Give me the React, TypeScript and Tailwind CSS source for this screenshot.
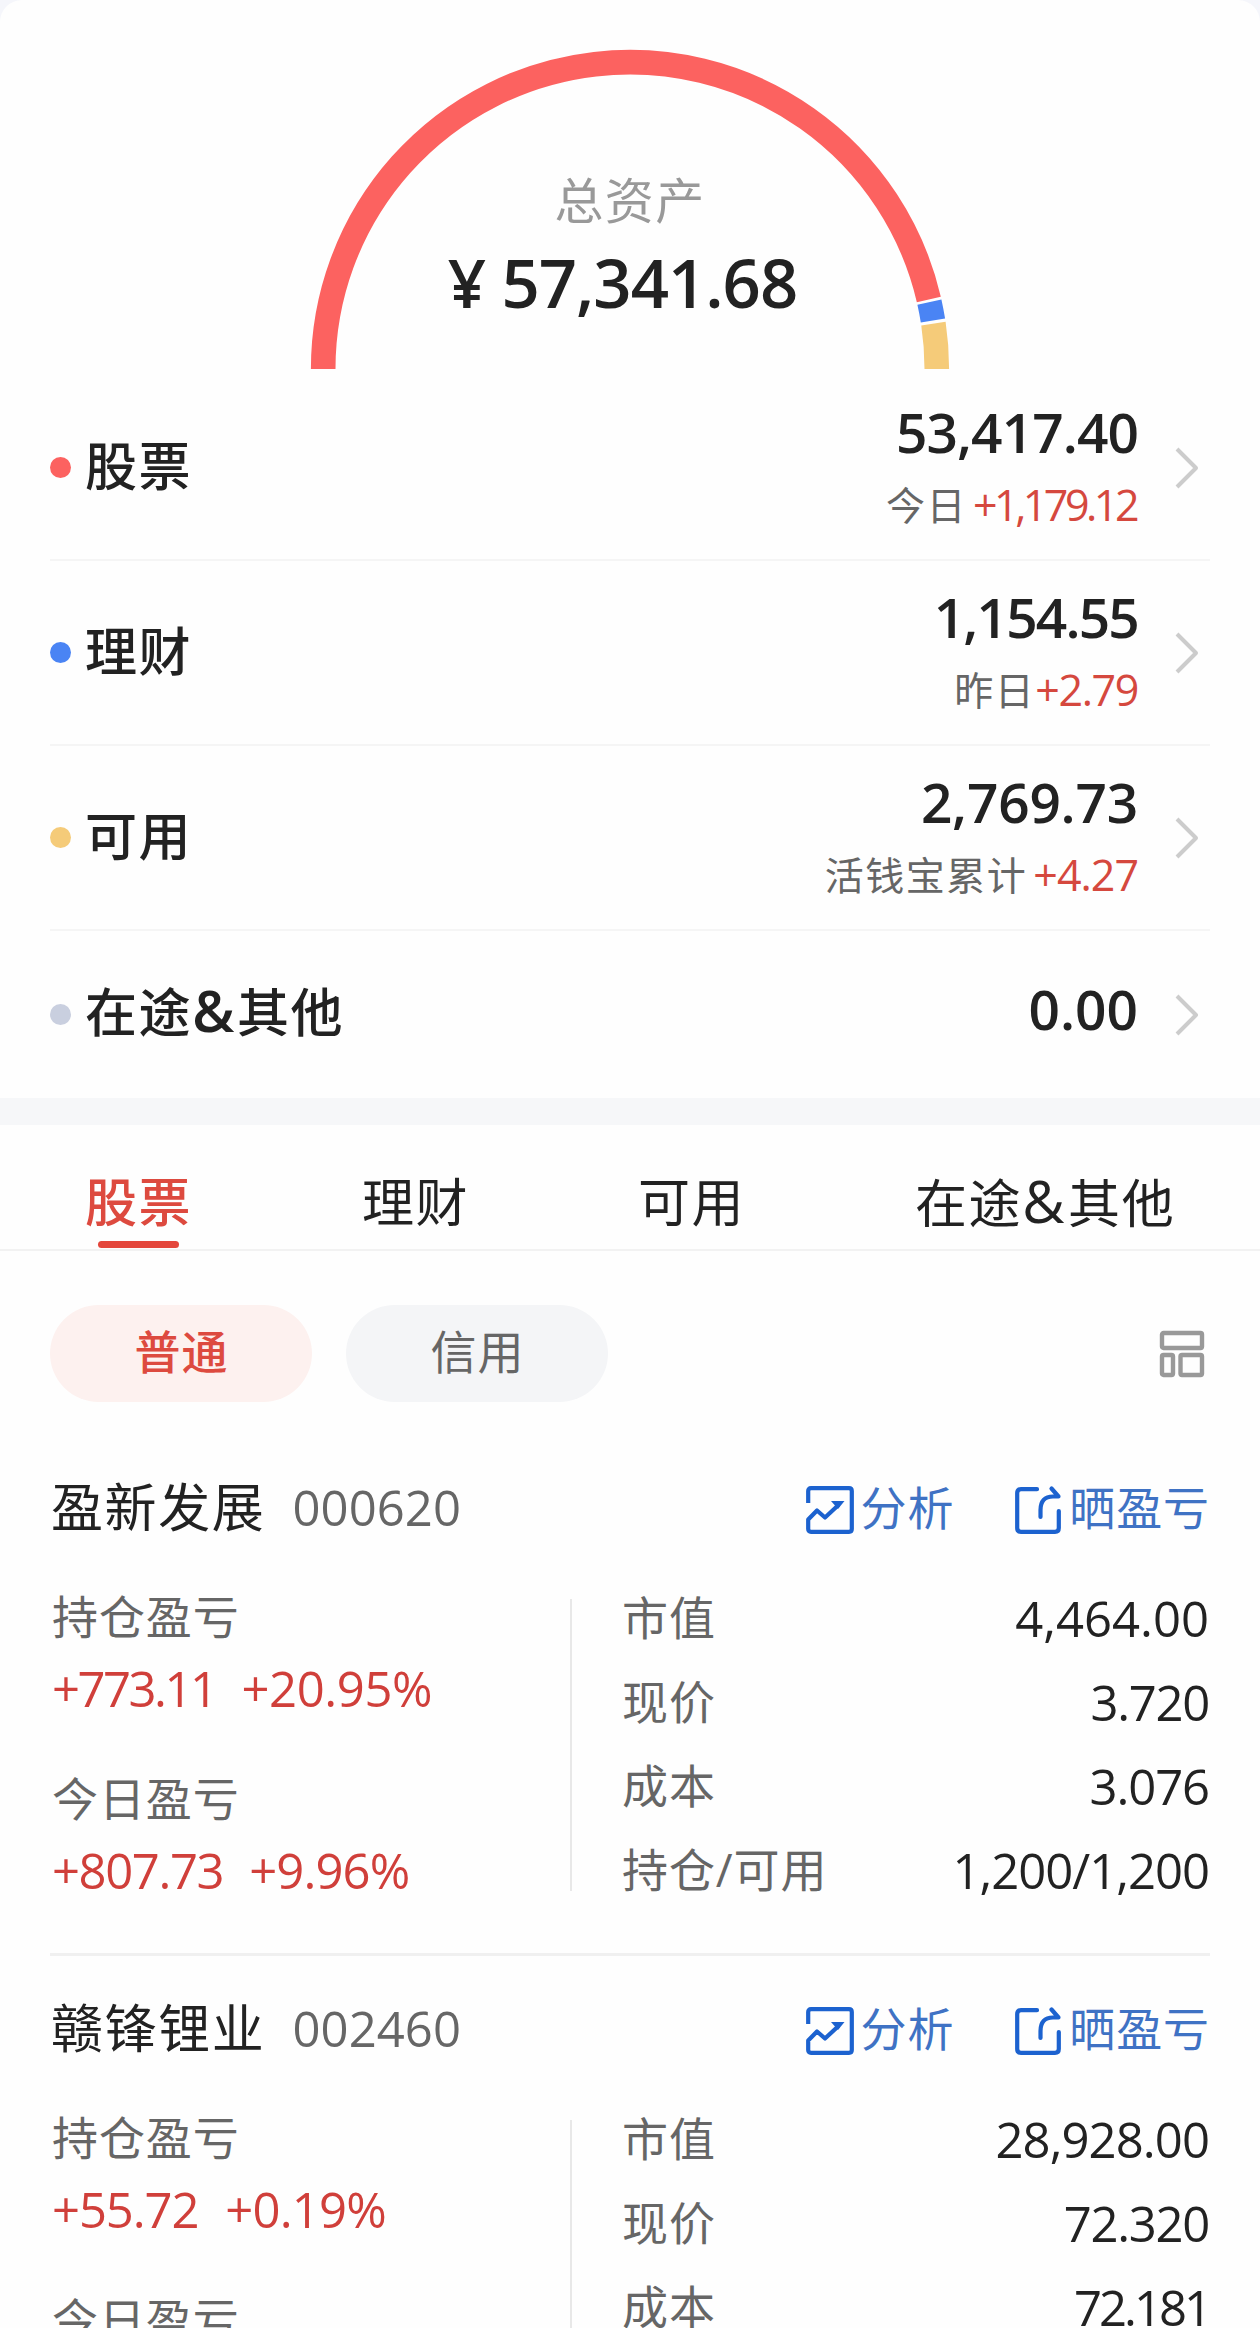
import React from "react";

const LABEL = "leading-[60px] text-[52px] tracking-[1.6px]";

function polar(r: number, deg: number) {
  const a = (deg * Math.PI) / 180;
  return `${(320 + r * Math.cos(a)).toFixed(2)} ${(320 - r * Math.sin(a)).toFixed(2)}`;
}

function arc(from: number, to: number) {
  return `M${polar(306.8, from)} A306.8 306.8 0 0 1 ${polar(306.8, to)}`;
}

function Gauge() {
  return (
    <svg className="absolute left-[310px] top-[49px]" width="640" height="320" viewBox="0 0 640 320" fill="none" strokeWidth="24.6">
      <path d={arc(180, 13.1)} stroke="#fc6260" />
      <path d={arc(12.6, 9.1)} stroke="#4a84f4" />
      <path d={arc(8.5, 0)} stroke="#f5cb79" />
    </svg>
  );
}

function Chevron() {
  return (
    <svg className="ml-[37px] mr-[11px] shrink-0" width="24" height="42" viewBox="0 0 24 42" fill="none" stroke="#cccccc" strokeWidth="4">
      <path d="M2 2 L21 21 L2 40" strokeLinejoin="round" />
    </svg>
  );
}

type RowProps = {
  dot: string;
  label: string;
  value: string;
  valueCls: string;
  note?: string;
  noteCls?: string;
  delta?: string;
  deltaCls?: string;
};

const rows: RowProps[] = [
  { dot: "bg-[#fc6260]", label: "股票", value: "53,417.40", valueCls: "tracking-[-0.9px]", note: "今日", noteCls: "mr-[6px]", delta: "+1,179.12", deltaCls: "tracking-[-3.5px] mr-[2px]" },
  { dot: "bg-[#4a84f4]", label: "理财", value: "1,154.55", valueCls: "tracking-[-1.8px]", note: "昨日", noteCls: "", delta: "+2.79", deltaCls: "tracking-[-1.4px]" },
  { dot: "bg-[#f5cb79]", label: "可用", value: "2,769.73", valueCls: "tracking-[-0.2px]", note: "活钱宝累计", noteCls: "mr-[6px]", delta: "+4.27", deltaCls: "tracking-[-1px]" },
];

function AssetRow(r: RowProps) {
  return (
    <div className="mx-[50px] flex h-[185px] shrink-0 items-center border-b-2 border-[#f5f5f5]">
      <span className={`size-[21px] rounded-full ${r.dot}`} />
      <span className={`ml-[14px] -mt-[3px] font-medium ${LABEL}`}>{r.label}</span>
      <div className="ml-auto flex flex-col items-end">
        <span className={`text-[55px] leading-[73px] font-[650] ${r.valueCls}`}>{r.value}</span>
        <span className="flex leading-[73px]">
          <span className={`text-[39px] tracking-[1.5px] text-[#666] ${r.noteCls}`}>{r.note}</span>
          <span className={`text-[43px] text-[#d5483e] ${r.deltaCls}`}>{r.delta}</span>
        </span>
      </div>
      <Chevron />
    </div>
  );
}

function AnalysisIcon() {
  return (
    <svg className="mt-[5px]" width="50" height="50" viewBox="0 0 50 50" fill="none" stroke="#1c62cf" strokeWidth="4.2" strokeLinejoin="round">
      <path d="M3.2 18 V6 Q3.2 3.2 6 3.2 H44 Q46.8 3.2 46.8 6 V44 Q46.8 46.8 44 46.8 H6 Q3.2 46.8 3.2 44 V34.5 L12 25.5 L20 32.5 L33.5 20" />
      <path d="M26 16 H39.5 L33 24 Z" fill="#1c62cf" stroke="none" />
    </svg>
  );
}

function ShareIcon() {
  return (
    <svg className="mt-[5px]" width="50" height="50" viewBox="0 0 50 50" fill="none" stroke="#1c62cf" strokeWidth="4.2" strokeLinecap="round">
      <path d="M24 4.2 H8 Q4.2 4.2 4.2 8 V43 Q4.2 46.8 8 46.8 H42 Q45.8 46.8 45.8 43 V26" />
      <path d="M27.5 32 V25 Q27.5 11.5 40 11.5 H45.5 L38.5 3.5" strokeLinejoin="round" />
    </svg>
  );
}

function LayoutIcon() {
  return (
    <svg className="ml-auto mr-[5px] mt-px" width="46" height="48" viewBox="0 0 46 48" fill="none" stroke="#999" strokeWidth="4.4">
      <rect x="3" y="3" width="40" height="15" rx="1.5" />
      <rect x="3" y="25" width="11" height="20" rx="1.5" />
      <rect x="21.5" y="25" width="21.5" height="20" rx="1.5" />
    </svg>
  );
}

type Pair = { text: string; cls: string };
type Stock = { name: string; code: string; hold: Pair[]; today: Pair[]; values: [string, Pair][] };

const stocks: Stock[] = [
  {
    name: "盈新发展",
    code: "000620",
    hold: [{ text: "+773.11", cls: "tracking-[-2.5px]" }, { text: "+20.95%", cls: "tracking-[-0.4px]" }],
    today: [{ text: "+807.73", cls: "tracking-[-1.4px]" }, { text: "+9.96%", cls: "tracking-[-0.9px]" }],
    values: [
      ["市值", { text: "4,464.00", cls: "" }],
      ["现价", { text: "3.720", cls: "tracking-[-1.3px]" }],
      ["成本", { text: "3.076", cls: "tracking-[-1.1px]" }],
      ["持仓/可用", { text: "1,200/1,200", cls: "tracking-[-1px]" }],
    ],
  },
  {
    name: "赣锋锂业",
    code: "002460",
    hold: [{ text: "+55.72", cls: "tracking-[-1.1px]" }, { text: "+0.19%", cls: "tracking-[-0.8px] ml-[1px]" }],
    today: [],
    values: [
      ["市值", { text: "28,928.00", cls: "tracking-[-0.9px]" }],
      ["现价", { text: "72.320", cls: "tracking-[-1.3px]" }],
      ["成本", { text: "72.181", cls: "tracking-[-3px]" }],
    ],
  },
];

function Gain({ title, items }: { title: string; items: Pair[] }) {
  return (
    <div className="flex h-[182px] flex-col">
      <span className="text-[46px] leading-[72px] tracking-[0.9px] text-[#666]">{title}</span>
      <span className="flex gap-[26px] text-[49px] leading-[72px] text-[#d03f3a]">
        {items.map((p, i) => (
          <span key={i} className={p.cls}>{p.text}</span>
        ))}
      </span>
    </div>
  );
}

function StockCard(s: Stock) {
  return (
    <section className="mx-[50px] h-[521px] shrink-0 border-b-3 border-[#f0f0f0]">
      <div className="flex h-[142px] items-center pt-[2px] leading-[60px]">
        <span className={`ml-[1px] ${LABEL}`}>{s.name}</span>
        <span className="ml-[27px] text-[49px] tracking-[0.1px] text-[#666]">{s.code}</span>
        <span className="ml-auto flex items-center text-[46px] tracking-[0.9px] text-[#3f72c4]">
          <AnalysisIcon />
          <span className="ml-[5px]">分析</span>
        </span>
        <span className="ml-[59px] flex items-center text-[46px] tracking-[0.9px] text-[#3f72c4]">
          <ShareIcon />
          <span className="ml-[6px]">晒盈亏</span>
        </span>
      </div>
      <div className="flex">
        <div className="ml-[2px] mt-[3px] w-[518px]">
          <Gain title="持仓盈亏" items={s.hold} />
          <Gain title="今日盈亏" items={s.today} />
        </div>
        <div className="mt-[22px] h-[292px] w-[2px] bg-[#e8e8e8]" />
        <div className="ml-[50px] mr-[1px] flex-1">
          {s.values.map(([k, v]) => (
            <div key={k} className="flex h-[84px] items-center justify-between">
              <span className="-mt-[4px] text-[46px] tracking-[0.9px] text-[#666]">{k}</span>
              <span className={`-mt-px text-[49px] ${v.cls}`}>{v.text}</span>
            </div>
          ))}
        </div>
      </div>
    </section>
  );
}

export default function App() {
  return (
    <div className="h-[2328px] w-[1260px] overflow-hidden bg-[#f5f6fb]">
      <div className="flex h-[2328px] flex-col overflow-hidden rounded-t-[22px] bg-[#fefefe] font-['Open_Sans','Noto_Sans_CJK_SC',sans-serif] text-[#222]">
        <header className="relative h-[376px] shrink-0">
          <Gauge />
          <div className="flex flex-col items-center pt-[160px]">
            <span className="text-[49px] leading-[80px] tracking-[1.4px] text-[#999]">总资产</span>
            <span className="-ml-[15px] text-[67px] leading-[85px] font-[650] tracking-[-1px]">¥ 57,341.68</span>
          </div>
        </header>
        {rows.map((r) => (
          <AssetRow key={r.label} {...r} />
        ))}
        <div className="mx-[50px] flex h-[167px] shrink-0 items-center">
          <span className="size-[21px] rounded-full bg-[#c9cfdf]" />
          <span className={`ml-[14px] -mt-[5px] font-medium ${LABEL}`}>
            在途<span className="mr-[1px] text-[57px] leading-none font-semibold">&amp;</span>其他
          </span>
          <span className="ml-auto -mt-[10px] text-[55px] font-[650]">0.00</span>
          <Chevron />
        </div>
        <div className="h-[27px] shrink-0 bg-[#f6f7f9]" />
        <nav className="flex h-[126px] shrink-0 border-b-2 border-[#f2f2f2] pl-[85px] pt-[47px]">
          <div className="relative w-[277px]">
            <span className={`font-medium text-[#dd4a3f] ${LABEL}`}>股票</span>
            <span className="absolute left-[13px] top-[69px] h-[7px] w-[81px] rounded-full bg-[#e4463b]" />
          </div>
          <span className={`w-[276px] ${LABEL}`}>理财</span>
          <span className={`w-[277px] ${LABEL}`}>可用</span>
          <span className={LABEL}>
            在途<span className="mr-[2px] text-[58px] leading-none">&amp;</span>其他
          </span>
        </nav>
        <div className="mx-[50px] mt-[54px] flex h-[97px] shrink-0 items-center gap-[34px] text-[46px] tracking-[0.9px]">
          <span className="flex h-[97px] w-[262px] items-center justify-center rounded-full bg-[#fdf1ef] pb-[4px] pl-[1px] font-medium text-[#dd4a3f]">普通</span>
          <span className="flex h-[97px] w-[262px] items-center justify-center rounded-full bg-[#f4f5f7] pb-[4px] pl-[1px] text-[#666]">信用</span>
          <LayoutIcon />
        </div>
        <div className="h-[33px] shrink-0" />
        {stocks.map((s) => (
          <StockCard key={s.code} {...s} />
        ))}
      </div>
    </div>
  );
}
